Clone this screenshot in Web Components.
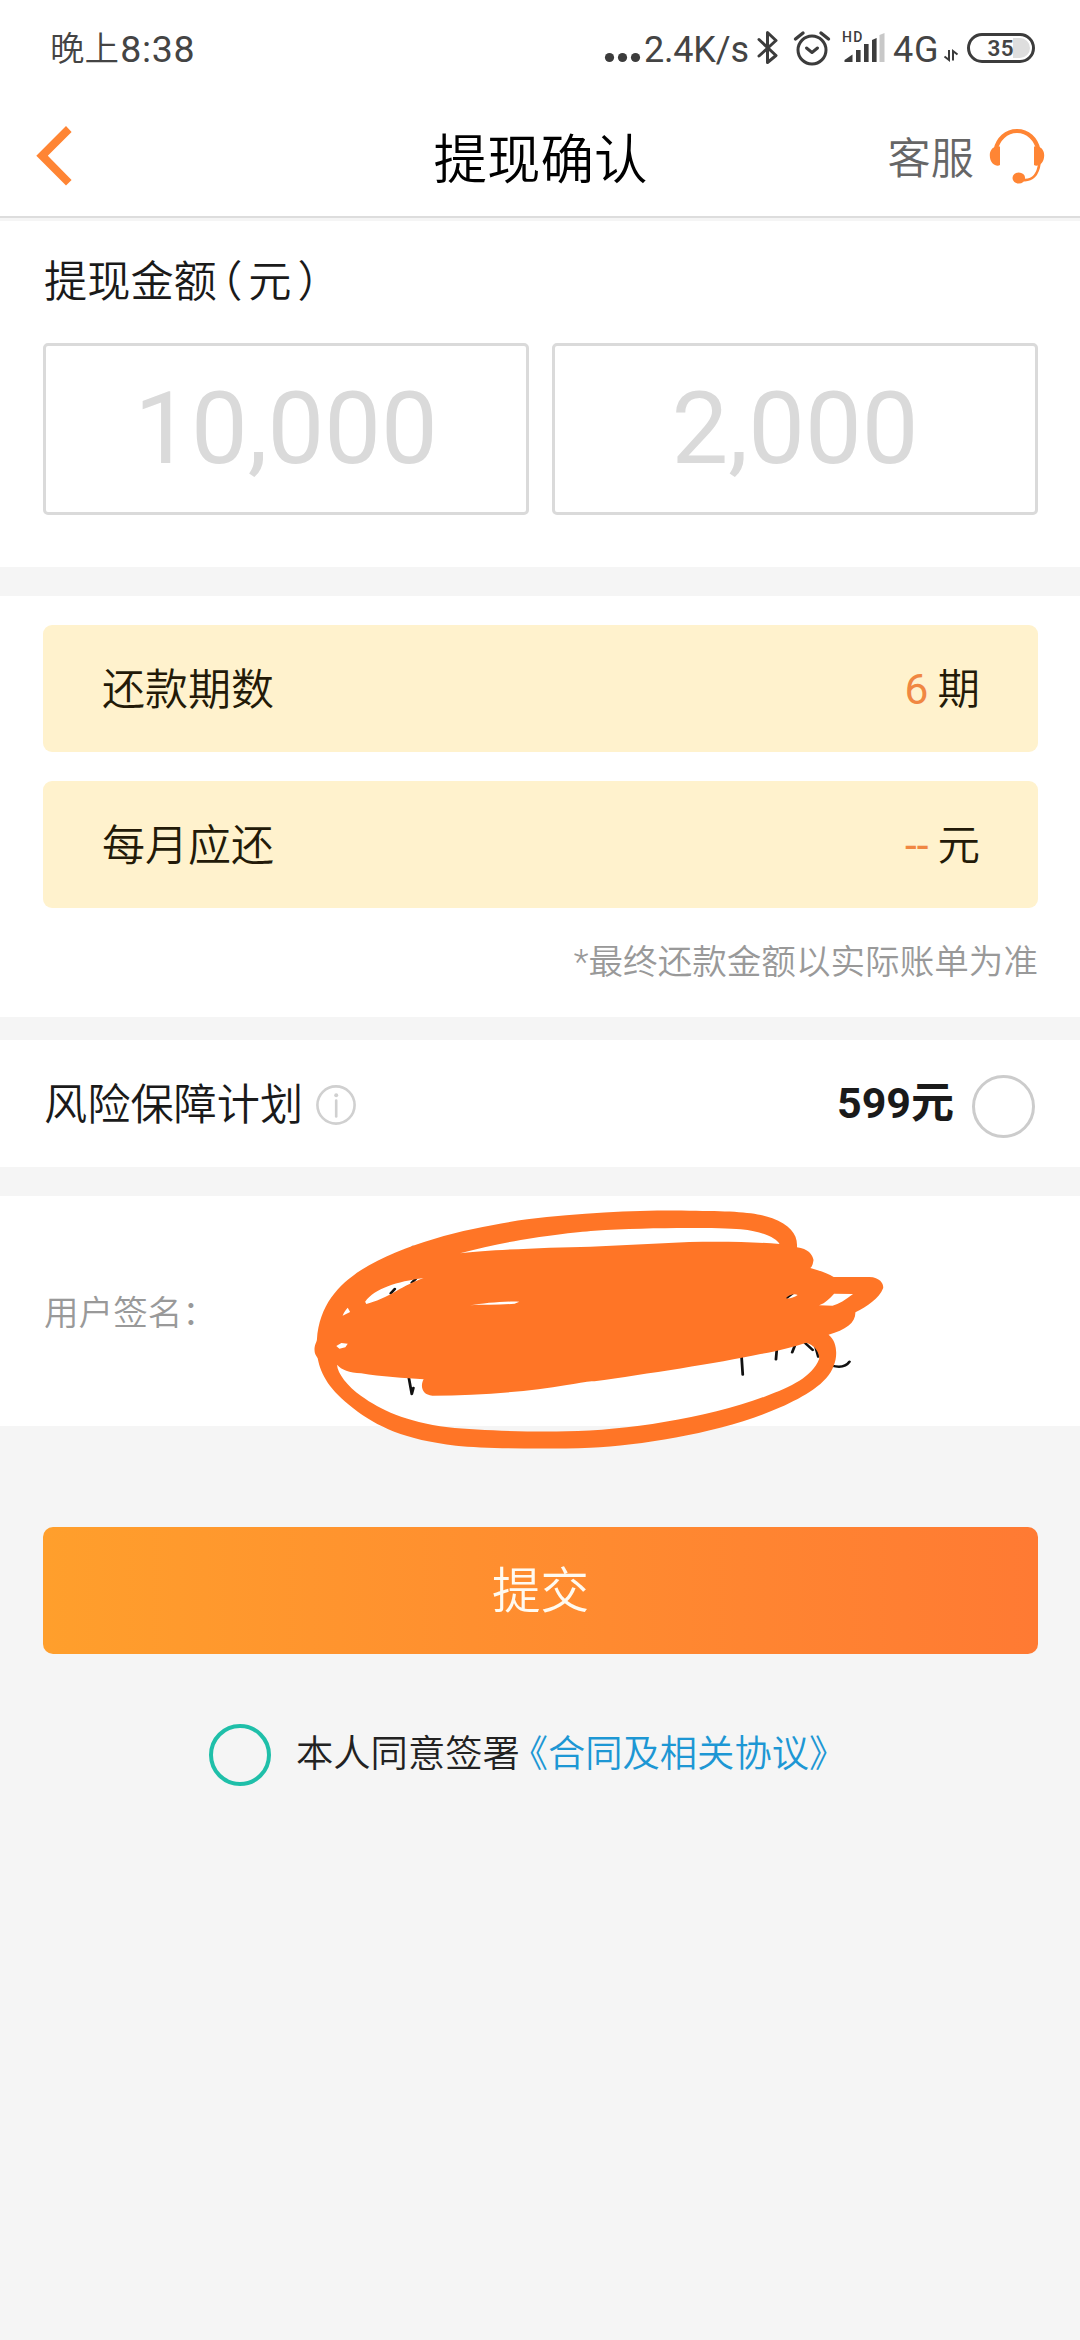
<!DOCTYPE html>
<html lang="zh-CN">
<head>
<meta charset="utf-8">
<meta name="viewport" content="width=device-width">
<title>提现确认</title>
<style>
html,body{margin:0;padding:0}
body{background:#f5f5f5;font-family:Roboto,"Noto Sans CJK SC",sans-serif;color:#1a1a1a;font-size:43.2px;font-weight:350}
</style>
</head>
<body>
<withdraw-page></withdraw-page>
<script>
function define(name, html) {
  const t = document.createElement('template');
  t.innerHTML = '<style>*{box-sizing:border-box}svg{display:block;flex:none}</style>' + html;
  customElements.define(name, class extends HTMLElement {
    constructor() {
      super();
      this.attachShadow({mode: 'open'}).appendChild(t.content.cloneNode(true));
    }
  });
}

define('status-bar', `
<style>
:host{display:flex;box-sizing:border-box;height:100px;padding:0 45px 0 50px;background:#fff;color:#444;align-items:flex-start;justify-content:space-between}
.time{font-size:37.5px;line-height:48px;padding-top:25px;display:flex;letter-spacing:.1px}
.time b{font-weight:350;font-size:34.5px}
.time i{font-style:normal;font-weight:400;margin-left:1px;letter-spacing:.7px}
.right{display:flex}
.t{font-size:36px;line-height:48px;padding-top:25.5px;font-weight:400;white-space:pre}
.net{width:112px;letter-spacing:-.2px}
.g{width:48px;letter-spacing:.8px}
.batt{width:68px;height:30px;margin-top:33px;border:3px solid #3c3c3c;border-radius:15px;padding:2px;display:flex}
.fill{flex:1;border-radius:10px;background:linear-gradient(90deg,#fff 41px,#dedede 41px);font-size:22.5px;font-weight:600;line-height:20px;padding-left:15.5px;letter-spacing:.3px}
</style>
<div class="time"><b>晚上</b><i>8:38</i></div>
<div class="right">
  <svg width="40" height="100"><g fill="#3c3c3c"><circle cx="5.500" cy="57.500" r="4.600"/><circle cx="18.500" cy="57.500" r="4.600"/><circle cx="31.500" cy="57.500" r="4.600"/></g></svg>
  <span class="t net">2.4K/s</span>
  <svg width="34" height="100" fill="none" stroke="#3c3c3c" stroke-width="3" stroke-linejoin="round" stroke-linecap="round"><path d="M3 39.500 20 55.500 11.500 62.500V32.500L20 40.500 3 56"/></svg>
  <svg width="50" height="100" fill="none" stroke="#3c3c3c" stroke-width="3" stroke-linecap="round" stroke-linejoin="round"><circle cx="22" cy="50" r="14"/><path d="M16.500 48 22 52.500 27.500 48"/><path d="M5.500 39 13 33M31 33 38.500 39" stroke-width="3.400"/></svg>
  <svg width="53" height="100"><text x="2" y="42" font-size="14" font-weight="500" letter-spacing="1.200" fill="#3c3c3c">HD</text><g fill="#3c3c3c"><path d="M4.500 62V60L12.500 54.500V62Z"/><rect x="16" y="50" width="4.600" height="12"/><rect x="24" y="44" width="4.600" height="18"/><path d="M32 62V40L36.600 38V62Z"/></g><path d="M39.500 62V35L44.500 33V62Z" fill="#c8c8c8"/></svg>
  <span class="t g">4G</span>
  <svg width="26" height="100" fill="none" stroke="#3c3c3c" stroke-width="2"><path d="M8 50V60L3.500 56.500M12 60.500V51L16.500 54.500"/></svg>
  <div class="batt"><div class="fill">35</div></div>
</div>`);

define('nav-bar', `
<style>
:host{display:grid;grid-template-columns:1fr auto 1fr;align-items:center;box-sizing:border-box;height:121px;background:#fff;border-bottom:3px solid #f5f5f5;box-shadow:inset 0 -2px #ddd;padding:0 35px 2px 36px}
.back{margin-bottom:4px}
h1{margin:0;font-size:53.500px;font-weight:350;line-height:70px;padding-top:5px;color:#000}
.help{display:flex;justify-content:flex-end;align-items:center;color:#666;font-size:43.200px;line-height:50px;gap:15px}
.help span{padding-top:4px}
.help svg{margin-bottom:4px}
</style>
<svg class="back" width="36" height="60" viewBox="36 126 36 60"><path d="M66 126 71.600 132 47.800 155.700 71.600 180 66 185.600 36.300 155.700Z" fill="#ff8534"/></svg>
<h1>提现确认</h1>
<div class="help"><span>客服</span>
<svg width="56" height="56" viewBox="989 128 56 56" fill="none" stroke="#ff8534"><path d="M995.500 150C998 139 1006 131 1017 131S1036 139 1038.500 150" stroke-width="4.200"/><path d="M1039.500 163C1038 175 1032 181 1023 180" stroke-width="2.600"/><g fill="#ff8534" stroke="none"><path d="M996 146.500H1000V165C997 167.500 989.800 164 989.800 155.500C989.800 151 992 147.500 996 146.500ZM1038 146.500H1034V165C1037 167.500 1044.200 164 1044.200 155.500C1044.200 151 1042 147.500 1038 146.500Z"/><ellipse cx="1018.800" cy="178" rx="6.300" ry="5.500"/></g></svg></div>`);

define('amount-box', `
<style>
:host{display:flex;flex:1;box-sizing:border-box;height:172px;border:3px solid #dadada;border-radius:5px;align-items:center;justify-content:center;font-size:101px;font-weight:400;line-height:118px;color:#dadada}
</style><slot></slot>`);

define('amount-section', `
<style>
:host{display:block;box-sizing:border-box;height:346px;padding:32px 42px 0 43px;background:#fff}
.label{display:flex;line-height:60px;padding-left:1px;color:#1a1a1a}
.l,.r{font-feature-settings:"halt"}
.l{margin:0 6px 0 4px}.r{margin-left:6px}
.boxes{display:flex;gap:23px;margin-top:30px}
</style>
<div class="label"><span>提现金额</span><span class="l">（</span><span>元</span><span class="r">）</span></div>
<div class="boxes"><slot></slot></div>`);

define('repay-row', `
<style>
:host{display:flex;box-sizing:border-box;height:127px;padding:2px 58px 0 59px;border-radius:9px;background:#fff2cd;align-items:center;justify-content:space-between;line-height:60px;color:#231a08;font-size:43px}
.v{display:flex;gap:9px;font-size:42.500px}
.v ::slotted(span){color:#f08742;font-weight:400}
</style>
<slot></slot><div class="v"><slot name="value"></slot><slot name="unit"></slot></div>`);

define('repay-section', `
<style>
:host{display:flex;flex-direction:column;gap:29px;box-sizing:border-box;height:421px;padding:29px 42px 0 43px;margin-top:29px;background:#fff}
.note{font-size:34.600px;line-height:50px;text-align:right;color:#999}
</style>
<slot></slot><div class="note">*最终还款金额以实际账单为准</div>`);

define('plan-section', `
<style>
:host{display:flex;box-sizing:border-box;height:127px;padding:0 45px 0 44px;margin-top:23px;background:#fff;align-items:center;line-height:60px}
.name{padding-top:4px}
svg{margin:3px 0 0 13px}
.price{margin-left:auto;font-weight:700;font-size:43px;padding-bottom:1px}
.radio{width:63px;height:63px;border:3px solid #ccc;border-radius:50%;margin:6px 0 0 18px}
</style>
<span class="name">风险保障计划</span>
<svg width="40" height="40" fill="none" stroke="#d0d0d0" stroke-width="2.600"><circle cx="20" cy="20" r="18.600"/><path d="M20.200 15.500V31.500" stroke-linecap="round"/><circle cx="20.200" cy="10.300" r="2" fill="#d0d0d0" stroke="none"/></svg>
<span class="price">599元</span><span class="radio"></span>`);

define('signature-section', `
<style>
:host{display:flex;position:relative;box-sizing:border-box;height:230px;margin-top:29px;background:#fff;padding:3px 0 0 44px;align-items:center;font-size:34.600px;line-height:50px;color:#999}
svg{position:absolute;left:290px;top:-6px}
</style>
<span>用户签名：</span>
<svg width="620" height="280" viewBox="0 0 1568 840" preserveAspectRatio="none">
<path fill="none" stroke="#111" stroke-width="7" stroke-linecap="round" stroke-linejoin="round" d="M311 171V190M300 560 308 612 312 594M1142 500 1145 554M1231 480 1229 508M1277 466 1270 487M1302 458 1322 480M1329 470 1336 500M1370 527C1395 535 1408 527 1415 515M255 310 265 297M308 278 318 266M1256 324 1270 311"/>
<path fill="#ff7526" fill-rule="evenodd" d="M62 480C62 465 66 460 68 450C74 345 122 285 180 240C300 150 480 108 600 88C750 66 900 60 1010 62C1120 63 1180 66 1220 85C1265 105 1285 135 1282 172C1310 175 1322 195 1324 210C1322 225 1320 230 1316 234C1340 242 1360 250 1375 261L1465 261C1495 262 1502 285 1500 295C1490 325 1460 350 1430 367C1430 400 1405 420 1362 434C1385 455 1385 500 1375 527C1360 580 1300 620 1240 652C1100 725 900 765 760 773C650 778 500 776 420 767C290 750 220 710 160 655C100 600 78 555 70 505C65 495 62 490 62 480Z
M430 190C550 150 700 128 770 122C900 112 1080 112 1140 118C1200 125 1230 145 1238 162C1180 156 1100 154 1010 156L760 170C650 172 500 180 430 190Z
M119 524C130 540 150 547 180 550C230 560 290 564 338 568C328 590 335 615 360 617C480 617 600 605 700 585C740 578 760 573 770 574C900 552 1080 520 1190 492C1230 484 1280 468 1306 458C1325 465 1340 485 1338 508C1320 560 1270 590 1200 620C1050 685 850 722 700 724C600 726 480 722 400 712C290 695 230 660 180 618C145 588 120 550 119 524Z
M190 335C215 295 270 275 338 264C310 275 290 290 270 302C245 320 215 335 193 342Z
M133 377C137 365 143 357 146 353L152 366ZM117 468 130 459 146 461 140 472 125 476Z
M455 346C490 340 540 333 580 335L568 341C530 345 490 343 455 346Z
M1254 325C1262 315 1275 310 1284 315C1275 322 1265 326 1254 325Z
M1376 311 1424 312C1405 330 1388 342 1372 347L1338 346C1355 338 1365 325 1376 311Z"/></svg>`);

define('submit-button', `
<style>
:host{display:flex;box-sizing:border-box;height:127px;margin:101px 42px 0 43px;padding-top:2px;border-radius:10px;background:linear-gradient(90deg,#ff9f2c,#ff7a33);align-items:center;justify-content:center;color:#fffaf0;font-size:48.500px;line-height:60px}
</style><slot></slot>`);

define('agree-line', `
<style>
:host{display:flex;align-items:center;margin:70px 0 0 209px;font-size:37.300px;line-height:50px;color:#222}
i{width:62px;height:62px;border:4px solid #1fbfa9;border-radius:50%;margin-right:25px;flex:none}
span,a{padding-bottom:2px}
a{display:flex;color:#1d97d4;margin-left:9.500px}
.q{font-feature-settings:"halt";padding:0}
</style>
<i></i><span>本人同意签署</span><a><span class="q">《</span><span class="q">合同及相关协议》</span></a>`);

define('withdraw-page', `
<style>:host{display:flex;flex-direction:column;height:2340px;overflow:hidden}
</style>
<status-bar></status-bar>
<nav-bar></nav-bar>
<amount-section><amount-box>10,000</amount-box><amount-box>2,000</amount-box></amount-section>
<repay-section>
  <repay-row>还款期数<span slot="value">6</span><div slot="unit">期</div></repay-row>
  <repay-row>每月应还<span slot="value">--</span><div slot="unit">元</div></repay-row>
</repay-section>
<plan-section></plan-section>
<signature-section></signature-section>
<submit-button>提交</submit-button>
<agree-line></agree-line>`);
</script>
</body>
</html>
